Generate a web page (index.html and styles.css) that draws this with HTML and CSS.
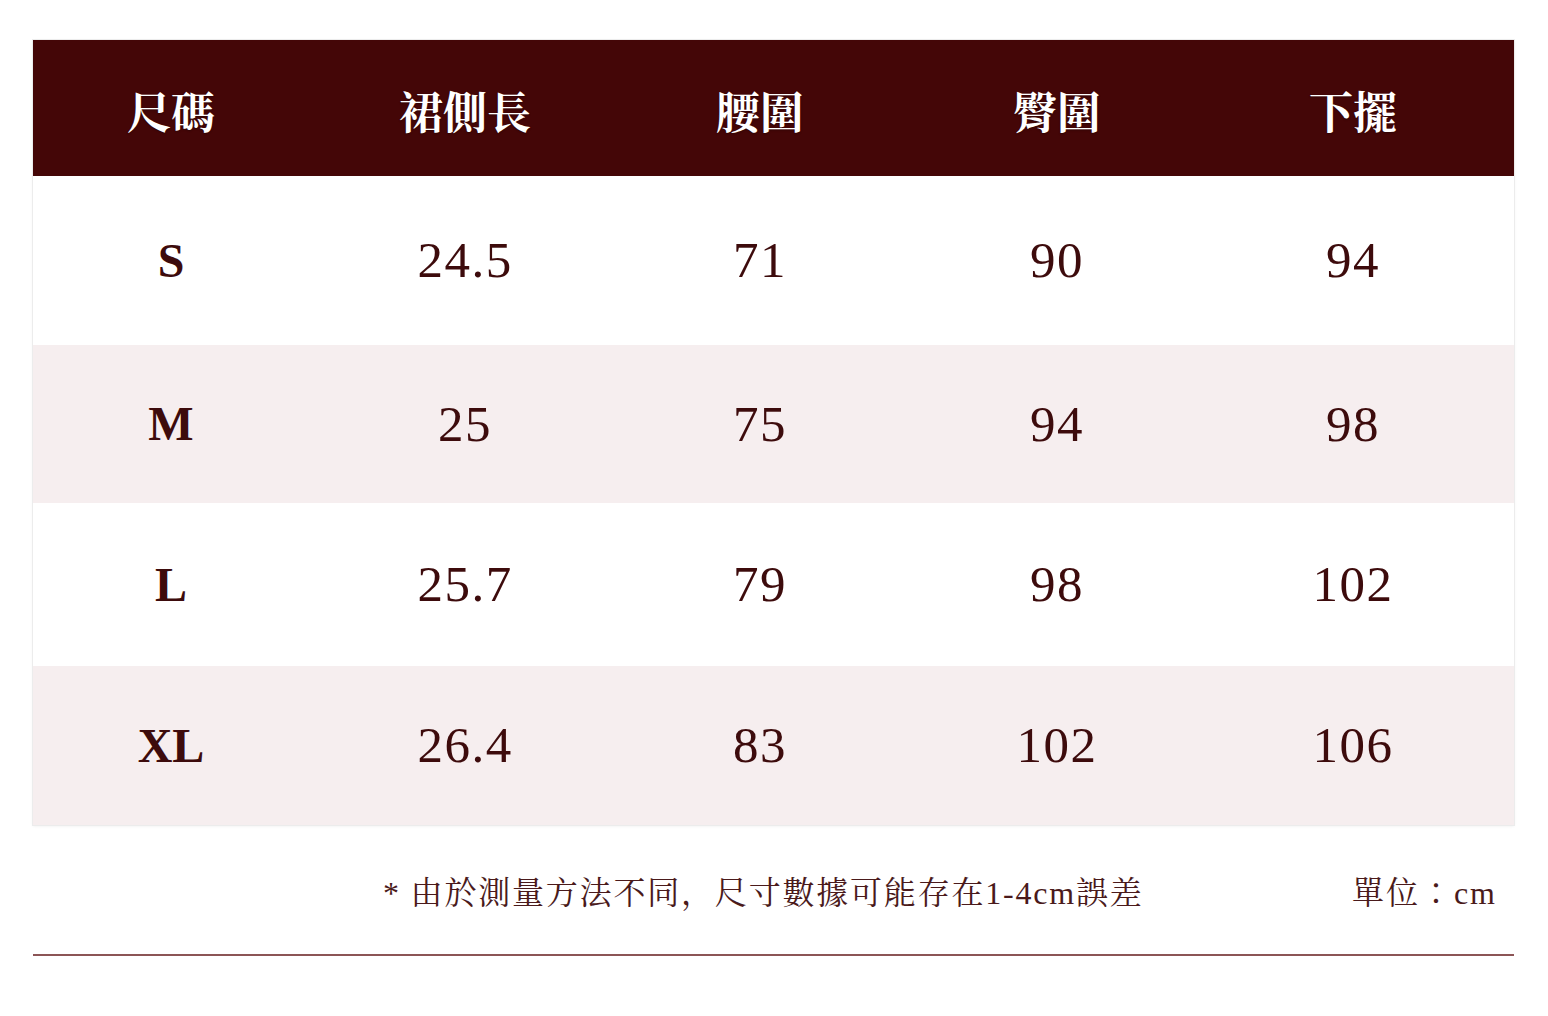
FILE: index.html
```html
<!DOCTYPE html>
<html lang="zh-Hant">
<head>
<meta charset="utf-8">
<title>尺碼表</title>
<link rel="stylesheet" href="styles.css">
</head>
<body>
<div class="page">
  <div class="table">
    <div class="row head">
      <div class="cell">尺碼</div>
      <div class="cell">裙側長</div>
      <div class="cell">腰圍</div>
      <div class="cell">臀圍</div>
      <div class="cell">下擺</div>
    </div>
    <div class="row">
      <div class="cell size">S</div>
      <div class="cell">24.5</div>
      <div class="cell">71</div>
      <div class="cell">90</div>
      <div class="cell">94</div>
    </div>
    <div class="row alt">
      <div class="cell size">M</div>
      <div class="cell">25</div>
      <div class="cell">75</div>
      <div class="cell">94</div>
      <div class="cell">98</div>
    </div>
    <div class="row">
      <div class="cell size">L</div>
      <div class="cell">25.7</div>
      <div class="cell">79</div>
      <div class="cell">98</div>
      <div class="cell">102</div>
    </div>
    <div class="row alt">
      <div class="cell size">XL</div>
      <div class="cell">26.4</div>
      <div class="cell">83</div>
      <div class="cell">102</div>
      <div class="cell">106</div>
    </div>
  </div>
  <div class="note-bar">
    <span class="note">* 由於測量方法不同<span class="punct" lang="zh-Hans">，</span>尺寸數據可能存在1-4cm誤差</span>
    <span class="unit">單位：cm</span>
  </div>
  <div class="divider"></div>
</div>
</body>
</html>
```
FILE: styles.css
```css
html, body {
  margin: 0;
  padding: 0;
  background: #ffffff;
}

.page {
  width: 1481px;
  margin: 0 0 0 33px;
  padding-top: 40px;
  font-family: "Liberation Serif", "Noto Serif CJK TC", "Noto Sans CJK TC", serif;
  color: #3d0b0c;
}

.table {
  display: grid;
  grid-template-rows: 136px 169px 158px 163px 159px;
  box-shadow: 0 0 0 1px #ececec, 0 1px 3px rgba(0, 0, 0, 0.08);
}

.row {
  display: grid;
  grid-template-columns: 276px 312px 278px 316px 276px;
  align-items: center;
  background: #ffffff;
}

.row.alt {
  background: #f6eeef;
}

.row.head {
  background: #440607;
  color: #ffffff;
}

.cell {
  text-align: center;
  font-size: 51px;
  line-height: 1;
  letter-spacing: 1.5px;
}

.head .cell {
  font-size: 44px;
  font-weight: 700;
  letter-spacing: 0;
  padding-top: 14px;
  text-shadow: 0 1px 2px rgba(0, 0, 0, 0.35);
}

.cell.size {
  font-weight: 700;
  font-size: 48px;
  letter-spacing: 0;
}

.note-bar {
  display: flex;
  justify-content: space-between;
  align-items: center;
  height: 129px;
  padding: 0 17px 0 350px;
  font-size: 32px;
  color: #4a1a1b;
}

.note {
  letter-spacing: 1.8px;
}

.punct {
  font-family: "Noto Serif CJK SC", "Noto Serif CJK JP", "Noto Sans CJK SC", serif;
}

.unit {
  letter-spacing: 2px;
}

.divider {
  height: 2px;
  background: #8c5556;
}
```
